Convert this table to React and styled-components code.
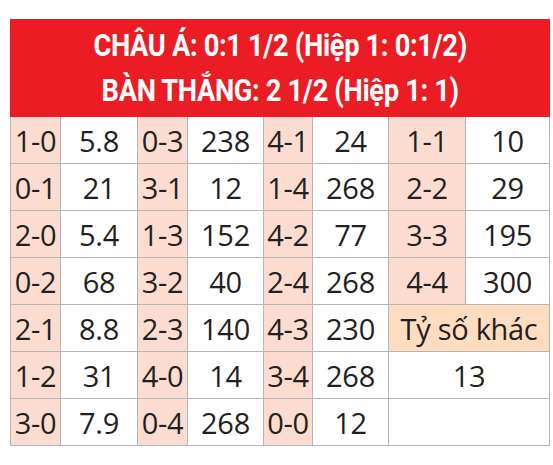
import React from 'react'
import styled, {createGlobalStyle} from 'styled-components'

const GlobalStyle = createGlobalStyle`
  html, body {
    margin: 0;
    padding: 0;
    background: #ffffff;
  }
`

const rows = [
  [['1-0', '5.8'], ['0-3', '238'], ['4-1', '24'], ['1-1', '10']],
  [['0-1', '21'], ['3-1', '12'], ['1-4', '268'], ['2-2', '29']],
  [['2-0', '5.4'], ['1-3', '152'], ['4-2', '77'], ['3-3', '195']],
  [['0-2', '68'], ['3-2', '40'], ['2-4', '268'], ['4-4', '300']],
  [['2-1', '8.8'], ['2-3', '140'], ['4-3', '230']],
  [['1-2', '31'], ['4-0', '14'], ['3-4', '268']],
  [['3-0', '7.9'], ['0-4', '268'], ['0-0', '12']],
]

const widths = [50, 77, 50, 76, 49, 76, 77, 84]

const Page = styled.div`
  padding: 19px 0 0 10px;
`

const Table = styled.table`
  border-collapse: collapse;
  table-layout: fixed;
  width: 539px;
  font-family: "Open Sans", "Noto Sans", sans-serif;
  color: #231f20;
`

const Header = styled.th`
  background: #ec1c24;
  color: #ffffff;
  height: 96px;
  padding: 0;
  text-align: center;
  border: 1px solid #ec1c24;
`

const HeaderText = styled.span`
  display: inline-block;
  font-family: Roboto, "Liberation Sans", sans-serif;
  font-weight: 700;
  font-size: 31px;
  line-height: 45px;
  letter-spacing: -0.4px;
  white-space: nowrap;
  transform: scaleX(0.88);
`

const Cell = styled.td`
  height: 46px;
  padding: 0;
  border: 1px solid #b5b5b5;
  text-align: center;
  font-size: 29px;
  line-height: 1;
  letter-spacing: -0.3px;
  background: ${p => (p.$score ? '#fcdcd0' : p.$other ? '#fddcc0' : '#ffffff')};
  white-space: nowrap;
  overflow: hidden;
`

const extra = [
  <Cell key="o" colSpan={2} $other>Tỷ số khác</Cell>,
  <Cell key="v" colSpan={2}>13</Cell>,
  <Cell key="e" colSpan={2}></Cell>,
]

export default function App() {
  return (
    <Page>
      <GlobalStyle />
      <Table>
        <colgroup>
          {widths.map((w, i) => <col key={i} style={{width: w}} />)}
        </colgroup>
        <thead>
          <tr>
            <Header colSpan={8}>
              <HeaderText>
                CHÂU Á: 0:1 1/2 (Hiệp 1: 0:1/2)<br />
                BÀN THẮNG: 2 1/2 (Hiệp 1: 1)
              </HeaderText>
            </Header>
          </tr>
        </thead>
        <tbody>
          {rows.map((r, i) => (
            <tr key={i}>
              {r.map(([s, v]) => (
                <React.Fragment key={s}>
                  <Cell $score>{s}</Cell>
                  <Cell>{v}</Cell>
                </React.Fragment>
              ))}
              {i >= 4 && extra[i - 4]}
            </tr>
          ))}
        </tbody>
      </Table>
    </Page>
  )
}
